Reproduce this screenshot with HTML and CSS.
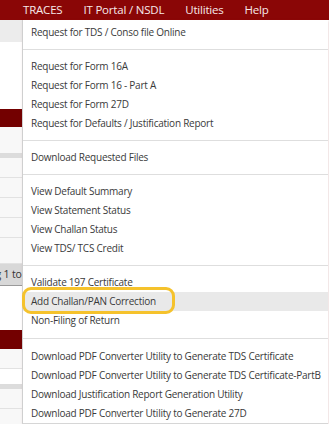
FILE: index.html
```html
<!DOCTYPE html>
<html lang="en">
<head>
    <meta charset="UTF-8">
    <meta name="viewport" content="width=device-width, initial-scale=1.0">
    <title>TRACES - Statements / Forms</title>
    <link rel="stylesheet" href="styles.css">
</head>
<body>
    <div class="topbar">
        <ul class="nav">
            <li class="nav-item">TRACES<ul class="dropdown">
                    <li class="menu-item">Request for TDS / Conso file Online</li>
                    <li class="divider"></li>
                    <li class="menu-item">Request for Form 16A</li>
                    <li class="menu-item">Request for Form 16 - Part A</li>
                    <li class="menu-item">Request for Form 27D</li>
                    <li class="menu-item">Request for Defaults / Justification Report</li>
                    <li class="divider"></li>
                    <li class="menu-item">Download Requested Files</li>
                    <li class="divider"></li>
                    <li class="menu-item">View Default Summary</li>
                    <li class="menu-item">View Statement Status</li>
                    <li class="menu-item">View Challan Status</li>
                    <li class="menu-item">View TDS/ TCS Credit</li>
                    <li class="divider"></li>
                    <li class="menu-item">Validate 197 Certificate</li>
                    <li class="menu-item hover marked">Add Challan/PAN Correction</li>
                    <li class="menu-item">Non-Filing of Return</li>
                    <li class="divider wide"></li>
                    <li class="menu-item">Download PDF Converter Utility to Generate TDS Certificate</li>
                    <li class="menu-item">Download PDF Converter Utility to Generate TDS Certificate-PartB</li>
                    <li class="menu-item">Download Justification Report Generation Utility</li>
                    <li class="menu-item">Download PDF Converter Utility to Generate 27D</li>
                </ul></li>
            <li class="nav-item">IT Portal / NSDL</li>
            <li class="nav-item">Utilities</li>
            <li class="nav-item">Help</li>
        </ul>
    </div>

    <!-- page behind the open menu -->
    <div class="page">
        <div class="crumb"></div>
        <div class="blank" style="height: 67px;"></div>
        <div class="section-head"></div>
        <div class="panel">
            <div class="panel-top"></div>
            <div class="table-head"></div>
            <div class="row"></div>
            <div class="row"></div>
            <div class="row"></div>
            <div class="row"></div>
            <div class="row last"></div>
        </div>
        <div class="pager">Showing 1 to 5 of 5 entries</div>
        <div class="blank" style="height: 44px;"></div>
        <div class="section-head tall"></div>
        <div class="panel">
            <div class="row"></div>
            <div class="blank" style="height: 15px;"></div>
            <div class="table-head"></div>
            <div class="row"></div>
            <div class="row"></div>
        </div>
    </div>
</body>
</html>
```

FILE: styles.css
```css
body {
    margin: 0;
    font-family: "Open Sans", "Noto Sans", sans-serif;
    background: #fff;
    overflow: hidden;
}
ul {
    list-style: none;
    margin: 0;
    padding: 0;
}
.topbar {
    position: relative;
    z-index: 5;
    height: 20px;
    background: #8a0606;
}
.nav {
    display: flex;
    gap: 21px;
    padding-left: 23px;
    height: 20px;
    align-items: center;
}
.nav-item {
    color: #f6e9e9;
    font-size: 11.5px;
    letter-spacing: -0.2px;
    line-height: 20px;
}
.dropdown {
    position: absolute;
    top: 20px;
    left: 22px;
    right: 1px;
    padding-top: 3px;
    background: #fff;
    border-left: 1px solid #cfcfcf;
    border-bottom: 1px solid #d6d6d6;
    box-shadow: 1px 1px 3px rgba(140, 40, 40, 0.18);
}
.menu-item {
    position: relative;
    height: 19px;
    line-height: 19px;
    padding-left: 8px;
    font-size: 10px;
    letter-spacing: -0.24px;
    color: #3a3a3a;
    white-space: nowrap;
}
.menu-item.hover {
    background: #e9e9e9;
}
.menu-item.marked::after {
    content: "";
    position: absolute;
    left: -1px;
    top: -5px;
    width: 147px;
    height: 21px;
    border: 3px solid #f5c22c;
    border-radius: 9px;
}
.divider {
    height: 1px;
    margin: 7px 0;
    background: #dedede;
}
.divider.wide {
    margin: 8px 0;
}

/* page under the menu */
.page {
    width: 22px;
}
.crumb {
    height: 22px;
    background: #ececec;
}
.section-head {
    height: 18px;
    background: #730000;
}
.section-head.tall {
    height: 19px;
}
.panel {
    background: #f8f8f8;
}
.panel-top {
    height: 26px;
}
.table-head {
    height: 5px;
    background: #dcdcdc;
}
.row {
    height: 19px;
    border-bottom: 1px solid #e2e2e2;
}
.row.last {
    height: 25px;
}
.pager {
    height: 21px;
    line-height: 21px;
    background: #d8d8d8;
    border-bottom: 1px solid #9a9a9a;
    font-size: 10.5px;
    letter-spacing: -0.2px;
    color: #333;
    white-space: nowrap;
    text-indent: -39px;
}
.blank {
    background: #fff;
}
```
